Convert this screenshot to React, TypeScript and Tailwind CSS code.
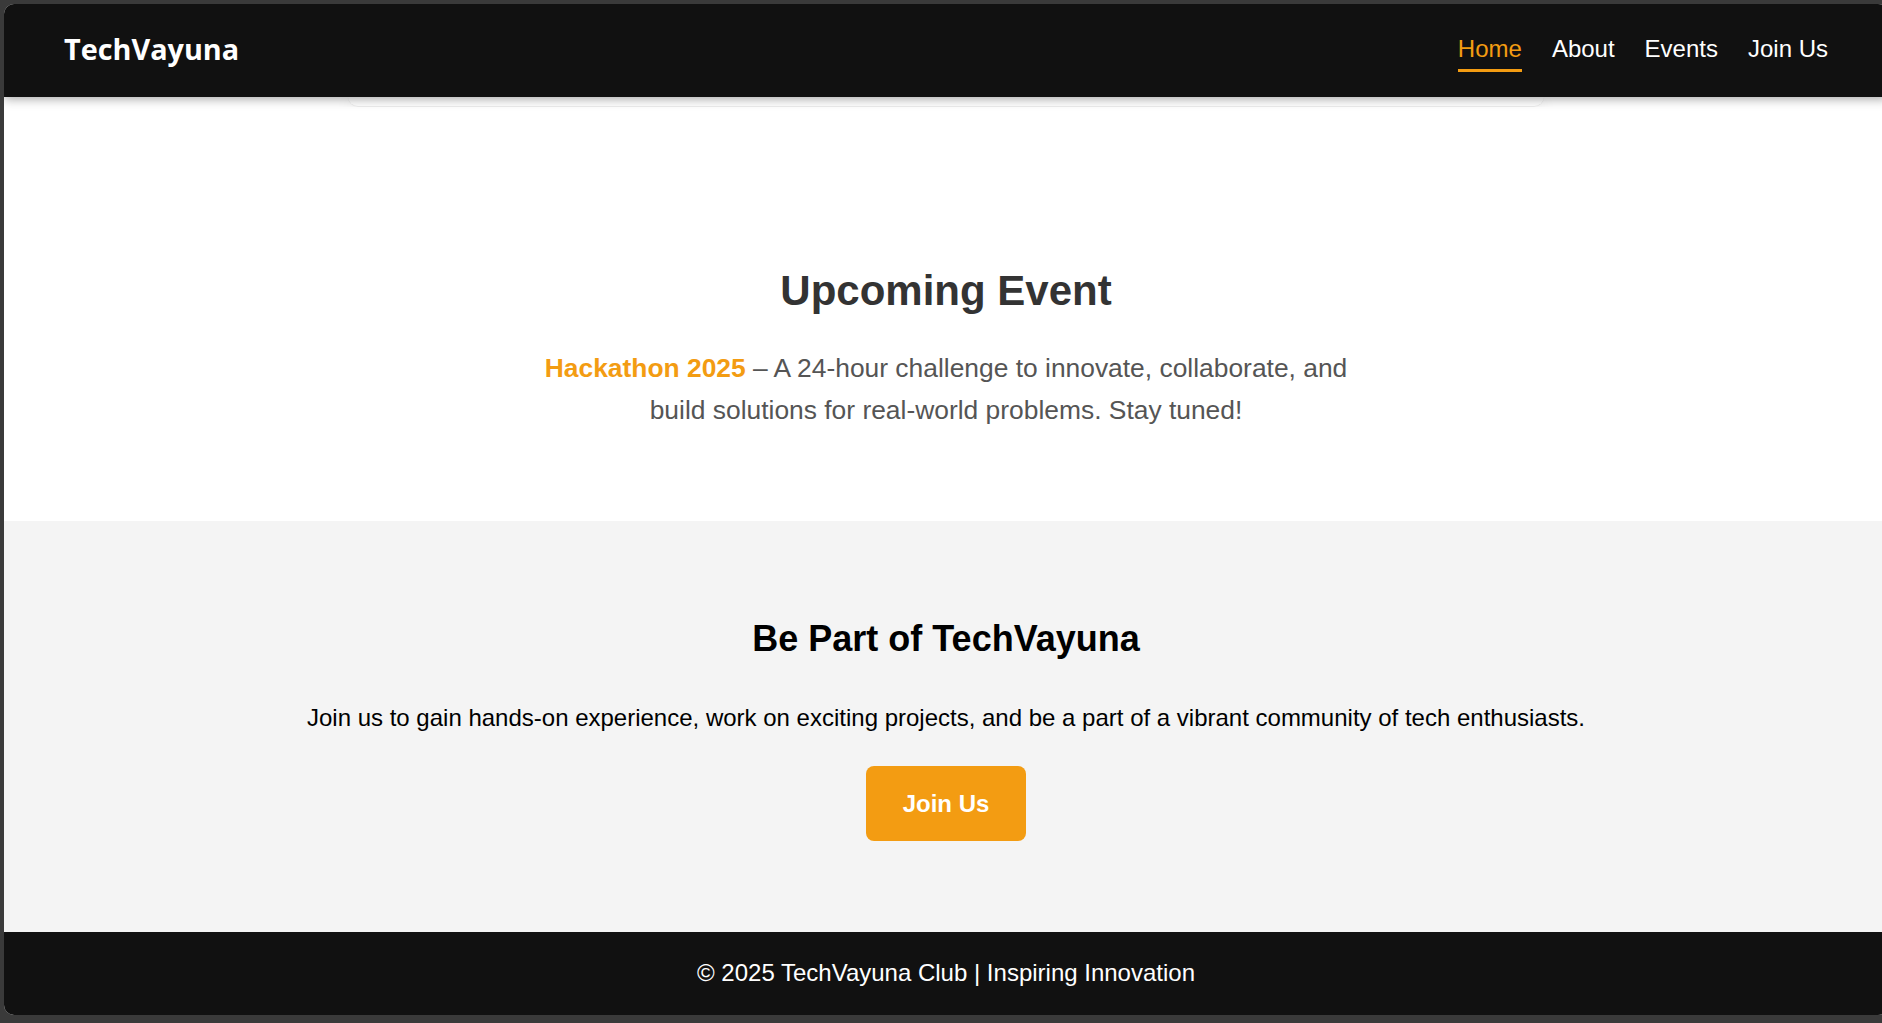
const navLinks = [
  { label: "Home", active: true },
  { label: "About", active: false },
  { label: "Events", active: false },
  { label: "Join Us", active: false },
];

const Navbar = () => {
  return (
    <header className="relative z-10 flex h-[93px] shrink-0 items-center justify-between bg-[#111111] px-[60px] shadow-[0_2px_10px_rgba(0,0,0,0.35)]">
      <div className="mb-[3px] font-['Open_Sans',sans-serif] text-[28.8px] font-bold leading-[36px] text-white">
        TechVayuna
      </div>
      <nav className="flex items-center gap-[30px]">
        {navLinks.map((link) => (
          <a
            key={link.label}
            href="#"
            className={
              link.active
                ? "relative pb-[4px] text-[24px] leading-[28px] text-[#f39c12]"
                : "relative pb-[4px] text-[24px] leading-[28px] text-white"
            }
          >
            {link.label}
            {link.active && (
              <span className="absolute -bottom-[5px] left-0 h-[3px] w-full bg-[#f39c12]" />
            )}
          </a>
        ))}
      </nav>
    </header>
  );
};

const EventSection = () => {
  return (
    <section className="h-[414px] shrink-0 bg-white pt-[160px] text-center">
      <h2 className="text-[42px] font-bold leading-[48px] text-[#333333]">
        Upcoming Event
      </h2>
      <p className="mx-auto mt-[32px] max-w-[830px] text-[26.4px] leading-[42px] text-[#555555]">
        <strong className="font-bold text-[#f39c12]">Hackathon 2025</strong> – A
        24-hour challenge to innovate, collaborate, and build solutions for
        real-world problems. Stay tuned!
      </p>
    </section>
  );
};

const JoinSection = () => {
  return (
    <section className="h-[411px] shrink-0 bg-[#f4f4f4] pt-[97px] text-center">
      <h2 className="text-[36px] font-bold leading-[41px] text-black">
        Be Part of TechVayuna
      </h2>
      <p className="mt-[45px] text-[24px] leading-[28px] text-black">
        Join us to gain hands-on experience, work on exciting projects, and be a
        part of a vibrant community of tech enthusiasts.
      </p>
      <a
        href="#"
        className="mt-[34px] inline-block rounded-[8px] bg-[#f39c12] px-[37px] py-[23.5px] text-[24px] font-bold leading-[28px] text-white"
      >
        Join Us
      </a>
    </section>
  );
};

const App = () => {
  return (
    <div className="h-[1023px] w-full overflow-hidden bg-[#3a3a3a] pl-[4px] pt-[4px] font-['Liberation_Sans',Arial,sans-serif]">
      <div className="flex h-[1011px] w-[1884px] flex-col overflow-hidden rounded-[10px] bg-white">
        <Navbar />
        <div className="h-[10px] shrink-0 bg-white">
          <div className="mx-auto h-[10px] w-[1196px] rounded-b-[18px] border-b border-[#ececec] bg-white shadow-[0_6px_18px_rgba(0,0,0,0.08)]" />
        </div>
        <EventSection />
        <JoinSection />
        <footer className="flex h-[83px] shrink-0 items-center justify-center bg-[#111111] pb-[2px] text-[24px] text-white">
          © 2025 TechVayuna Club | Inspiring Innovation
        </footer>
      </div>
    </div>
  );
};

export default App;
